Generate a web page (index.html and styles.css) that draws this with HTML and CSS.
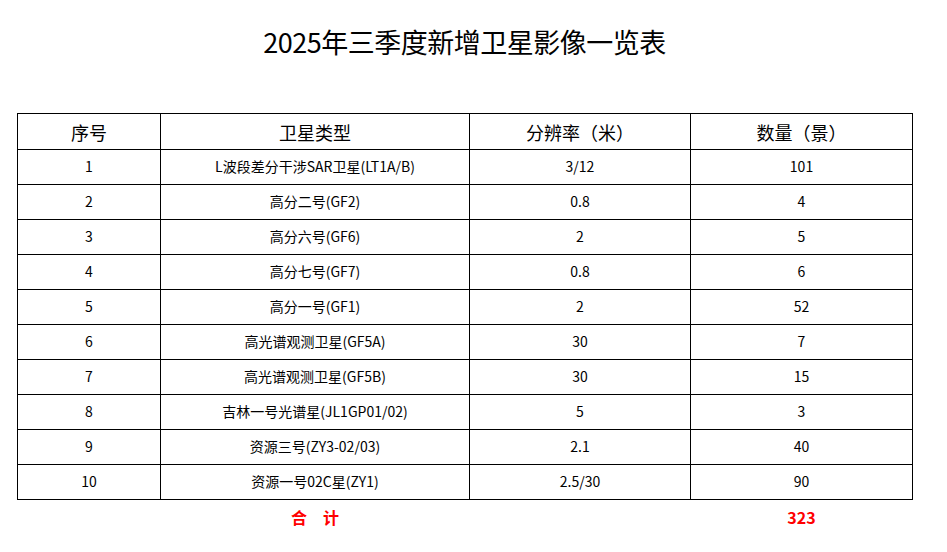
FILE: index.html
```html
<!DOCTYPE html>
<html lang="zh-CN">
<head>
<meta charset="utf-8">
<title>2025年三季度新增卫星影像一览表</title>
<link rel="stylesheet" href="styles.css">
</head>
<body>
<div class="page">
  <h1 class="title">2025年三季度新增卫星影像一览表</h1>
  <table class="sheet">
    <colgroup>
      <col class="c1"><col class="c2"><col class="c3"><col class="c4">
    </colgroup>
    <thead>
      <tr><th>序号</th><th>卫星类型</th><th>分辨率（米）</th><th>数量（景）</th></tr>
    </thead>
    <tbody>
      <tr><td>1</td><td>L波段差分干涉SAR卫星(LT1A/B)</td><td>3/12</td><td>101</td></tr>
      <tr><td>2</td><td>高分二号(GF2)</td><td>0.8</td><td>4</td></tr>
      <tr><td>3</td><td>高分六号(GF6)</td><td>2</td><td>5</td></tr>
      <tr><td>4</td><td>高分七号(GF7)</td><td>0.8</td><td>6</td></tr>
      <tr><td>5</td><td>高分一号(GF1)</td><td>2</td><td>52</td></tr>
      <tr><td>6</td><td>高光谱观测卫星(GF5A)</td><td>30</td><td>7</td></tr>
      <tr><td>7</td><td>高光谱观测卫星(GF5B)</td><td>30</td><td>15</td></tr>
      <tr><td>8</td><td>吉林一号光谱星(JL1GP01/02)</td><td>5</td><td>3</td></tr>
      <tr><td>9</td><td>资源三号(ZY3-02/03)</td><td>2.1</td><td>40</td></tr>
      <tr><td>10</td><td>资源一号02C星(ZY1)</td><td>2.5/30</td><td>90</td></tr>
    </tbody>
    <tfoot>
      <tr class="total"><td></td><td>合　计</td><td></td><td>323</td></tr>
    </tfoot>
  </table>
</div>
</body>
</html>
```

FILE: styles.css
```css
html, body {
  margin: 0;
  padding: 0;
  background: #ffffff;
}

.page {
  width: 895px;
  margin-left: 17px;
  font-family: "Noto Sans CJK SC", "Noto Sans", sans-serif;
  color: #000000;
}

.title {
  margin: 24px 0 0 0;
  height: 36px;
  line-height: 36px;
  font-size: 27px;
  font-weight: normal;
  text-align: center;
  letter-spacing: -0.5px;
}

.sheet {
  margin-top: 53px;
  width: 895px;
  border-collapse: collapse;
  table-layout: fixed;
}

.c1 { width: 143px; }
.c2 { width: 309px; }
.c3 { width: 221px; }
.c4 { width: 222px; }

.sheet th,
.sheet tbody td {
  border: 1px solid #000000;
  text-align: center;
  vertical-align: middle;
  padding: 0;
}

.sheet th {
  height: 35px;
  font-size: 18px;
  font-weight: normal;
}

.sheet tbody td {
  height: 32px;
  padding-bottom: 2px;
  font-size: 14px;
}

.sheet .total td {
  height: 32px;
  padding-bottom: 2px;
  text-align: center;
  font-size: 16px;
  font-weight: bold;
  color: #ff0000;
  border: none;
}
```
